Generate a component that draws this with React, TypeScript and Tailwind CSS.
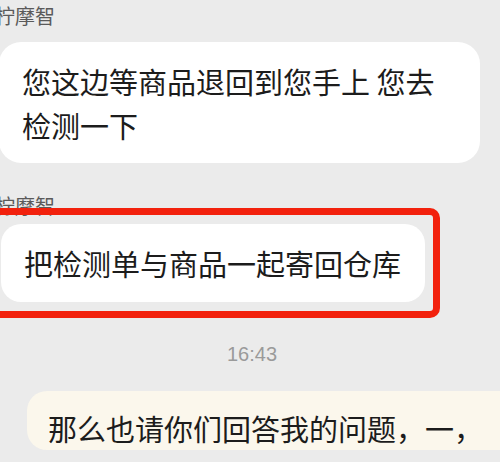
const font = { fontFamily: '"Noto Sans CJK SC", "Noto Sans", sans-serif' }

function Name() {
  return <div className="-ml-[5px] text-[20px] leading-[28px] text-[#5a5a5a]">柠摩智</div>
}

export default function App() {
  return (
    <div className="w-[500px] h-[462px] overflow-hidden bg-[#ebebeb] flex flex-col" style={font}>
      <div className="pt-[2px]">
        <Name />
      </div>
      <div className="mt-[12px] w-[481px] -ml-[1px] rounded-[22px] bg-white pl-[23px] pr-4 pt-[17px] pb-[16px] text-[29px] leading-[44px] text-[#1c1c1c]">
        您这边等商品退回到您手上 您去
        <br />
        检测一下
      </div>
      <div className="mt-[29px]">
        <Name />
      </div>
      <div className="-mt-[12px] -ml-[12px] w-[452px] rounded-r-[10px] border-[7px] border-[#f2210d] py-[9px] pl-[6px]">
        <div className="w-[424px] rounded-[20px] bg-white pl-[23px] py-[17px] text-[29px] leading-[44px] text-[#1c1c1c]">
          把检测单与商品一起寄回仓库
        </div>
      </div>
      <div className="mt-[24px] text-center pl-[4px] text-[20px] leading-[24px] text-[#9a9a9a]" style={{ fontFamily: '"Liberation Sans", sans-serif' }}>
        16:43
      </div>
      <div className="mt-[25px] ml-[27px] w-[500px] rounded-[20px] bg-[#fbf7ec] pl-[21px] pt-[15px] text-[29px] leading-[44px] text-[#1c1c1c]">
        那么也请你们回答我的问题，一，
      </div>
    </div>
  )
}
